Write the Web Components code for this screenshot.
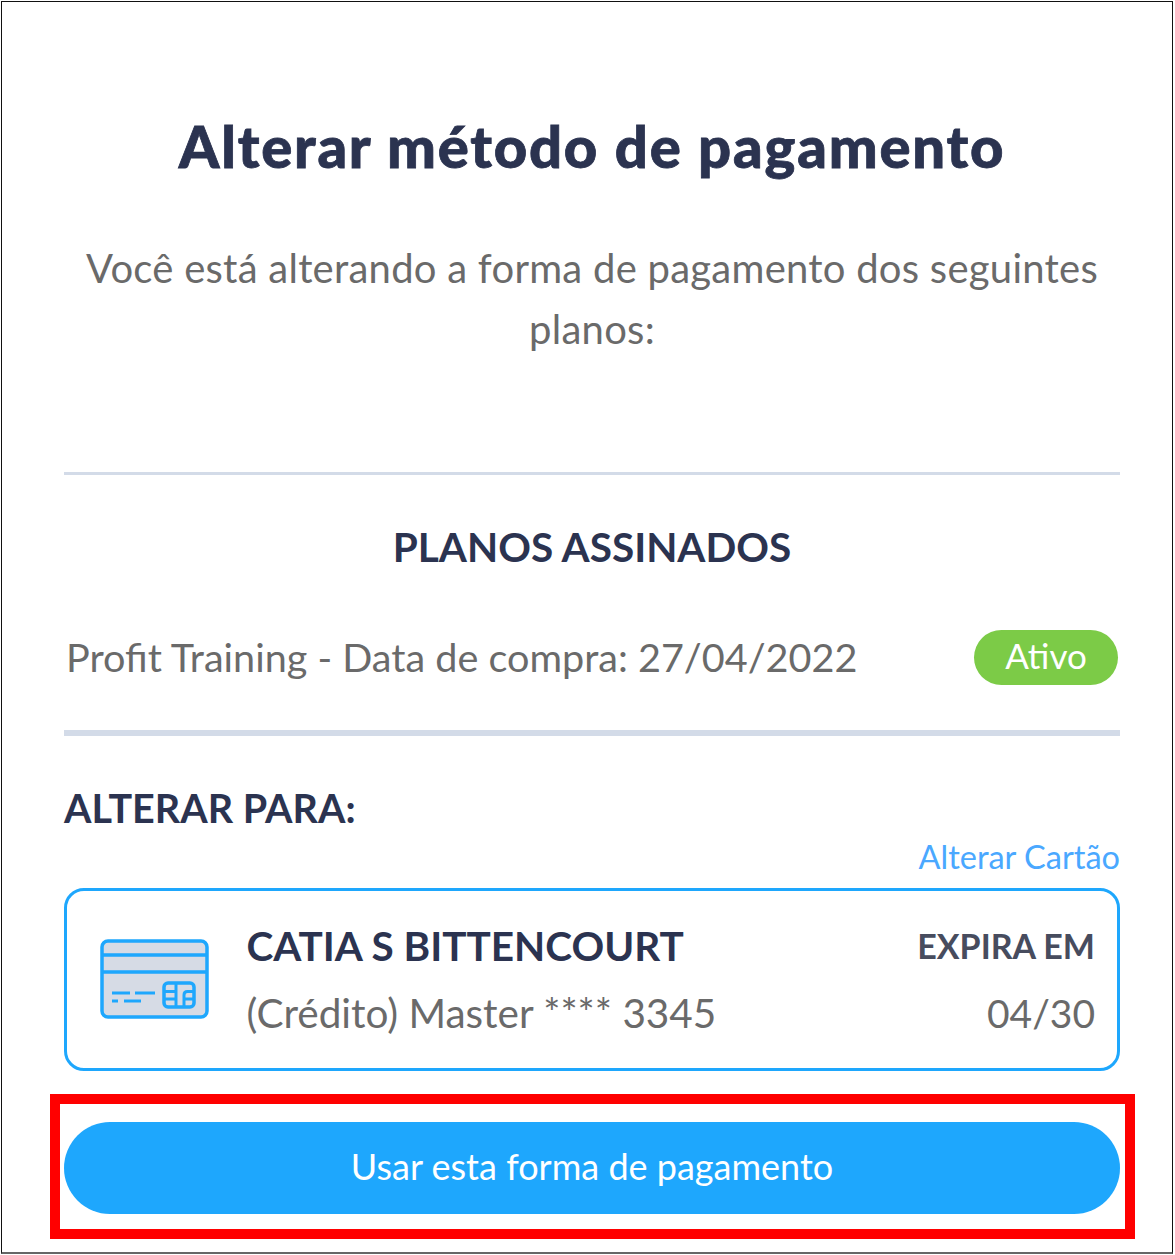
<!DOCTYPE html>
<html lang="pt-BR">
<head>
<meta charset="utf-8">
<title>Alterar método de pagamento</title>
<style>
  html, body { margin: 0; background: #fff; }
  body { font-family: Lato, "Open Sans", sans-serif; }
</style>
</head>
<body>
<payment-panel>
  <span slot="title">Alterar método de pagamento</span>
  <span slot="intro">Você está alterando a forma de pagamento dos seguintes planos:</span>
  <plan-row slot="plans" status="Ativo">Profit Training - Data de compra: 27/04/2022</plan-row>
  <card-box slot="card" holder="CATIA S BITTENCOURT" detail="(Crédito) Master **** 3345" expires="04/30"></card-box>
  <pay-button slot="action">Usar esta forma de pagamento</pay-button>
</payment-panel>

<script>
class PaymentPanel extends HTMLElement {
  constructor() {
    super();
    this.attachShadow({ mode: 'open' });
  }

  connectedCallback() {
    this.shadowRoot.innerHTML = `
      <style>
        :host {
          display: block;
          box-sizing: border-box;
          width: 1172px;
          height: 1253px;
          margin: 1px 0 0 1px;
          border: 1px solid #111;
          border-bottom: 2px solid #666;
          background: #fff;
          padding: 0 52px 0 62px;
          color: #2b3350;
        }
        h1 {
          margin: 0;
          padding-top: 112px;
          font-size: 58px;
          letter-spacing: 1.8px;
          line-height: 64px;
          font-weight: 900;
          -webkit-text-stroke: 0.8px #2b3350;
          text-align: center;
          color: #2b3350;
        }
        p {
          margin: 0 -10px;
          padding-top: 60px;
          font-size: 40px;
          letter-spacing: 0.25px;
          line-height: 61px;
          text-align: center;
          color: #6a6a6a;
        }
        hr {
          margin: 0;
          border: 0;
          background: #d3dbe8;
        }
        .first { height: 3px; margin-top: 112px; }
        .second { height: 6px; margin-top: 45px; }
        h2 {
          margin: 0;
          padding-top: 49px;
          font-size: 40.5px;
          line-height: 46px;
          font-weight: 700;
          text-align: center;
          color: #2b3350;
        }
        .plans { padding-top: 59px; }
        h3 {
          margin: 0;
          padding-top: 50px;
          font-size: 39.5px;
          line-height: 44px;
          font-weight: 700;
          color: #2b3350;
        }
        .change {
          text-align: right;
          font-size: 32.5px;
          line-height: 34px;
          color: #4aa8ff;
          padding-top: 10px;
          padding-bottom: 14px;
        }
      </style>
      <h1><slot name="title"></slot></h1>
      <p><slot name="intro"></slot></p>
      <hr class="first">
      <h2>PLANOS ASSINADOS</h2>
      <div class="plans"><slot name="plans"></slot></div>
      <hr class="second">
      <h3>ALTERAR PARA:</h3>
      <div class="change">Alterar Cartão</div>
      <slot name="card"></slot>
      <slot name="action"></slot>
    `;
  }
}

class PlanRow extends HTMLElement {
  constructor() {
    super();
    this.attachShadow({ mode: 'open' });
  }

  connectedCallback() {
    const status = this.getAttribute('status') || '';
    this.shadowRoot.innerHTML = `
      <style>
        :host {
          display: flex;
          align-items: center;
          justify-content: space-between;
          height: 56px;
          padding: 0 2px 0 2px;
          font-size: 39.6px;
          color: #6a6a6a;
        }
        .text { margin-top: -2px; }
        .badge {
          display: flex;
          align-items: center;
          justify-content: center;
          box-sizing: border-box;
          width: 144px;
          height: 55px;
          padding-bottom: 4px;
          border-radius: 28px;
          background: #7ccb47;
          color: #fff;
          font-size: 35px;
        }
      </style>
      <span class="text"><slot></slot></span>
      <span class="badge">${status}</span>
    `;
  }
}

class CardBox extends HTMLElement {
  constructor() {
    super();
    this.attachShadow({ mode: 'open' });
  }

  connectedCallback() {
    const holder = this.getAttribute('holder');
    const detail = this.getAttribute('detail');
    const expires = this.getAttribute('expires');
    this.shadowRoot.innerHTML = `
      <style>
        :host {
          display: flex;
          align-items: center;
          box-sizing: border-box;
          height: 183px;
          border: 3.5px solid #1ea7fd;
          border-radius: 20px;
          padding: 0 22px 0 32.5px;
          color: #6a6a6a;
          font-size: 40.5px;
        }
        svg { flex: none; width: 110px; height: 82px; margin-right: 37px; }
        .info { flex: 1; }
        .exp { text-align: right; }
        .top {
          font-weight: 700;
          color: #2b3350;
          line-height: 46px;
          margin-bottom: 21px;
        }
        .exp .top { font-size: 34px; color: #474c5e; }
        .exp .line { font-size: 39px; }
        .line { line-height: 46px; }
      </style>
      <svg viewBox="0 0 110 82" fill="none" stroke="#1ea7fd" stroke-width="3.5">
        <rect x="2" y="2" width="105" height="76" rx="6" fill="#d6dbe5"/>
        <path d="M2 16H107M2 33H107"/>
        <path d="M12 54H30M35 54H55M12 62H18M24 62H41" stroke-width="3"/>
        <rect x="64" y="44" width="30" height="24" rx="4"/>
        <path d="M64 52.5H76M64 60H76M76 44V68M84 68V56Q84 52.5 87.500 52.500H94M84 60H94" stroke-width="3"/>
      </svg>
      <div class="info">
        <div class="top">${holder}</div>
        <div class="line">${detail}</div>
      </div>
      <div class="exp">
        <div class="top">EXPIRA EM</div>
        <div class="line">${expires}</div>
      </div>
    `;
  }
}

class PayButton extends HTMLElement {
  constructor() {
    super();
    this.attachShadow({ mode: 'open' });
  }

  connectedCallback() {
    this.shadowRoot.innerHTML = `
      <style>
        :host {
          display: block;
          box-sizing: border-box;
          margin: 23px -15px 0 -14px;
          border: 10px solid #ff0000;
          padding: 18px 5px 15px 4px;
        }
        button {
          display: block;
          box-sizing: border-box;
          width: 100%;
          height: 92px;
          border: 0;
          border-radius: 46px;
          background: #1ea7fd;
          color: #fff;
          font: inherit;
          font-size: 36px;
          padding: 0 0 4px;
        }
      </style>
      <button type="button"><slot></slot></button>
    `;
  }
}

customElements.define('payment-panel', PaymentPanel);
customElements.define('plan-row', PlanRow);
customElements.define('card-box', CardBox);
customElements.define('pay-button', PayButton);
</script>
</body>
</html>
